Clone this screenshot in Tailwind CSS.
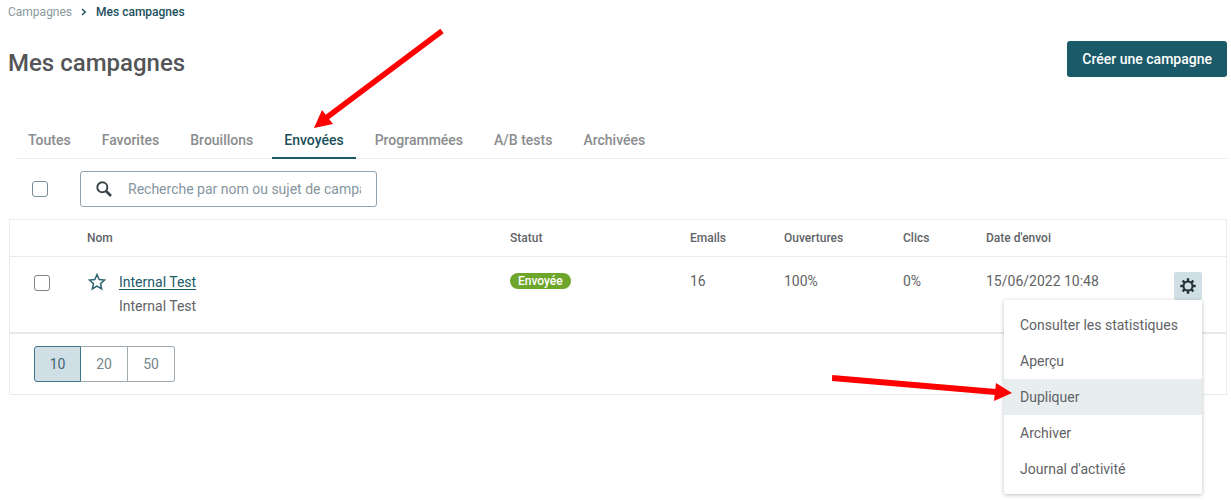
<!DOCTYPE html>
<html lang="fr">

<head>
    <meta charset="UTF-8">
    <meta name="viewport" content="width=device-width, initial-scale=1.0">
    <title>Mes campagnes</title>
    <script src="https://cdn.jsdelivr.net/npm/@tailwindcss/browser@4"></script>
</head>

<body class="bg-white text-sm text-[#5f6366] font-['Roboto',sans-serif]">
    <div class="relative min-h-screen pl-2 pr-1">
        <nav aria-label="Fil d'Ariane" class="flex items-center gap-2 pt-1 text-xs leading-4">
            <a href="#" class="text-[#8b989d]">Campagnes</a>
            <svg class="w-2 h-2" viewBox="0 0 8 8" fill="none" stroke="#1b4f5c" stroke-width="1.4">
                <path d="M2 1l3.2 3L2 7" />
            </svg>
            <span class="text-[#1b4f5c] font-medium">Mes campagnes</span>
        </nav>

        <header class="flex items-start justify-between pt-[21px]">
            <h1 class="pt-1 text-2xl leading-9 font-medium text-[#535557]">Mes campagnes</h1>
            <button type="button" class="h-9 px-[15px] rounded-[3px] bg-[#1b5a68] text-white font-medium">Créer une campagne</button>
        </header>

        <div class="flex gap-[7px] mt-[41px] ml-2 border-b border-[#e9ecee] font-medium text-[#8a8c8e]">
            <button type="button" class="h-[37px] px-3 -mb-px border-b-2 border-transparent">Toutes</button>
            <button type="button" class="h-[37px] px-3 -mb-px border-b-2 border-transparent">Favorites</button>
            <button type="button" class="h-[37px] px-3 -mb-px border-b-2 border-transparent">Brouillons</button>
            <button type="button" class="h-[37px] px-3 -mb-px border-b-2 border-[#1b5a68] text-[#1b4f5c]">Envoyées</button>
            <button type="button" class="h-[37px] px-3 -mb-px border-b-2 border-transparent">Programmées</button>
            <button type="button" class="h-[37px] px-3 -mb-px border-b-2 border-transparent">A/B tests</button>
            <button type="button" class="h-[37px] px-3 -mb-px border-b-2 border-transparent">Archivées</button>
        </div>

        <div class="flex items-center pl-6 py-3">
            <input type="checkbox" aria-label="Tout sélectionner" class="appearance-none w-4 h-4 border border-[#7d8f9b] rounded-[3px] bg-white">
            <label class="flex items-center gap-4 w-[297px] h-9 ml-8 px-[15px] border border-[#94a3b0] rounded-[3px]">
                <svg class="w-4 h-4 shrink-0" viewBox="0 0 16 16" fill="none" stroke="#3a4448">
                    <circle cx="6.3" cy="6.3" r="5" stroke-width="1.9" />
                    <path d="M10 10l5 5" stroke-width="2.7" />
                </svg>
                <input type="text" aria-label="Recherche" placeholder="Recherche par nom ou sujet de campagne"
                    class="flex-1 min-w-0 outline-none placeholder:text-[#8596a0]">
            </label>
        </div>

        <div class="ml-px border border-[#e9ecee]">
            <table class="w-full table-fixed text-left">
                <colgroup>
                    <col class="w-[77px]">
                    <col>
                    <col class="w-[180px]">
                    <col class="w-[94px]">
                    <col class="w-[119px]">
                    <col class="w-[83px]">
                    <col class="w-[188px]">
                    <col class="w-[52px]">
                </colgroup>
                <thead class="text-xs text-[#5f6366]">
                    <tr class="h-9 border-b border-[#e9ecee]">
                        <th></th>
                        <th class="font-medium">Nom</th>
                        <th class="font-medium">Statut</th>
                        <th class="font-medium">Emails</th>
                        <th class="font-medium">Ouvertures</th>
                        <th class="font-medium">Clics</th>
                        <th class="font-medium">Date d'envoi</th>
                        <th></th>
                    </tr>
                </thead>
                <tbody>
                    <tr class="h-[77px] align-top leading-6 border-b-2 border-[#e6e9eb]">
                        <td class="pl-6 pt-[18px]">
                            <input type="checkbox" aria-label="Sélectionner Internal Test" class="block appearance-none w-4 h-4 border border-[#7d8487] rounded-[3px] bg-white">
                        </td>
                        <td class="pt-[13px]">
                            <div class="flex gap-3">
                                <button type="button" aria-label="Ajouter aux favorites" class="h-6">
                                    <svg class="w-5 h-5" viewBox="0 0 20 20" fill="none" stroke="#2b6572" stroke-width="1.5">
                                        <path d="M10 2.600l2.200 5 5.300.5-4 3.600 1.200 5.300-4.700-2.800-4.700 2.800 1.200-5.300-4-3.600 5.300-.5z" />
                                    </svg>
                                </button>
                                <div>
                                    <a href="#" class="text-[#1b5a68] underline underline-offset-2">Internal Test</a>
                                    <p>Internal Test</p>
                                </div>
                            </div>
                        </td>
                        <td class="pt-4">
                            <span class="block w-fit px-2 rounded-full bg-[#6ea52b] text-white text-xs leading-4 font-medium">Envoyée</span>
                        </td>
                        <td class="pt-3">16</td>
                        <td class="pt-3">100%</td>
                        <td class="pt-3">0%</td>
                        <td class="pt-3">15/06/2022 10:48</td>
                        <td class="pt-[15px]">
                            <div class="relative w-7">
                                <button type="button" aria-label="Actions" class="flex items-center justify-center w-7 h-7 rounded-[2px] bg-[#d0dfe6]">
                                    <svg class="w-4 h-4" viewBox="0 0 16 16" fill="none" stroke="#263238">
                                        <circle cx="8" cy="8" r="4.5" stroke-width="2" />
                                        <path d="M8 .3v2.700M8 13v2.700M.3 8h2.700M13 8h2.700M2.600 2.600l1.900 1.900M11.500 11.500l1.900 1.900M2.600 13.400l1.900-1.900M11.500 4.500l1.900-1.900" stroke-width="2.4" />
                                    </svg>
                                </button>
                                <ul class="absolute right-0 top-full z-10 w-[198px] py-[7px] bg-white rounded-[2px] shadow-[0_1px_4px_rgba(0,0,0,0.25)]">
                                    <li><a href="#" class="block px-4 leading-9">Consulter les statistiques</a></li>
                                    <li><a href="#" class="block px-4 leading-9">Aperçu</a></li>
                                    <li><a href="#" class="block px-4 leading-9 bg-[#e8edef]">Dupliquer</a></li>
                                    <li><a href="#" class="block px-4 leading-9">Archiver</a></li>
                                    <li><a href="#" class="block px-4 leading-9">Journal d'activité</a></li>
                                </ul>
                            </div>
                        </td>
                    </tr>
                </tbody>
            </table>

            <div class="flex pl-6 py-3 text-[#76868e]">
                <button type="button" class="w-[47px] h-9 border border-[#3c7885] rounded-l-[3px] bg-[#d0dfe6] text-[#41666f]">10</button>
                <button type="button" class="w-[47px] h-9 border-y border-r border-[#a0abb2]">20</button>
                <button type="button" class="w-[47px] h-9 border-y border-r border-[#a0abb2] rounded-r-[3px]">50</button>
            </div>
        </div>

        <!-- annotation arrows -->
        <svg class="absolute left-[314px] top-7 w-[132px] h-[101px] pointer-events-none" viewBox="314 28 132 101" fill="#f00">
            <path d="M442 31L326 118" stroke="#f00" stroke-width="5.5" />
            <path d="M314 128l8-18 11 14z" />
        </svg>
        <svg class="absolute left-[832px] top-[374px] z-20 w-[180px] h-7 pointer-events-none" viewBox="832 374 180 28" fill="#f00">
            <path d="M832 378l164 14" stroke="#f00" stroke-width="6" />
            <path d="M1012 393l-16-10-2 18z" />
        </svg>
    </div>
</body>

</html>
